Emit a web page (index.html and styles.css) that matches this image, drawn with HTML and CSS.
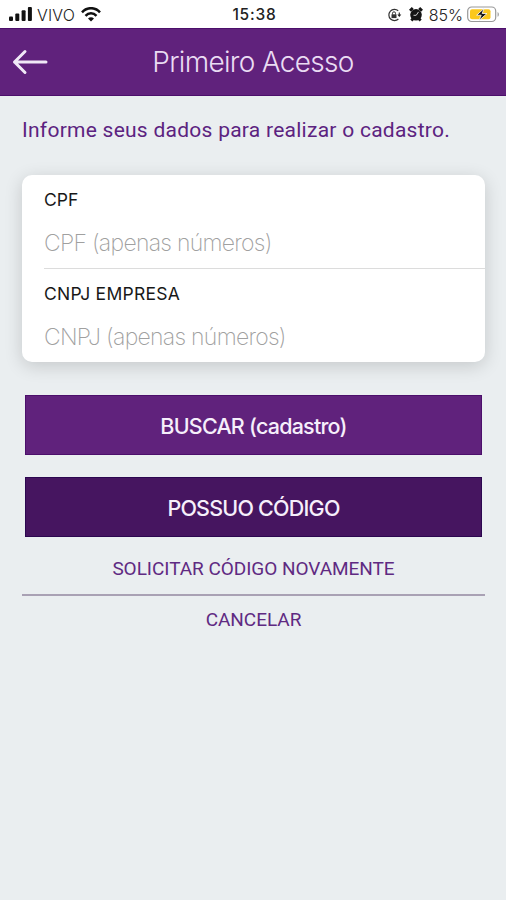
FILE: index.html
```html
<!DOCTYPE html>
<html lang="pt-BR">
<head>
<meta charset="utf-8">
<title>Primeiro Acesso</title>
<link rel="stylesheet" href="styles.css">
</head>
<body>
<div class="status">
  <div class="status-left">
    <svg class="signal" width="24" height="15" viewBox="0 0 24 15"><rect x="0" y="9.5" width="4" height="4.5" rx="1"/><rect x="6.3" y="6.5" width="4" height="7.5" rx="1"/><rect x="12.6" y="3.2" width="4" height="10.8" rx="1"/><rect x="18.9" y="0" width="4" height="14" rx="1"/></svg>
    <span class="carrier">VIVO</span>
    <svg class="wifi" width="20" height="15" viewBox="0 0 20 15" fill="none" stroke="#111" stroke-width="2.5"><path d="M1 5.3C6-.2 14-.2 19 5.3M4.5 8.9c3.2-3.4 7.8-3.4 11 0"/><path d="M7 11.4c1.8-1.7 4.2-1.7 6 0L10 14.5z" fill="#111" stroke="none"/></svg>
  </div>
  <span class="time">15:38</span>
  <div class="status-right">
    <svg class="lock" width="15" height="14" viewBox="0 0 15 14" fill="none" stroke="#333"><path d="M11.2 2.8A5.6 5.6 0 1 0 11.4 11M12.3 4.5v3" stroke-width="1.2"/><path d="M10.3 6.5h4L12.3 9z" fill="#222" stroke="none"/><rect x="4.5" y="6.3" width="5" height="3.8" fill="#333" stroke="none"/><path d="M5.5 6.5V5.3a1.5 1.5 0 0 1 3 0v1.2"/></svg>
    <svg class="alarm" width="14" height="15" viewBox="0 0 14 15"><circle cx="7" cy="7.8" r="5.8" fill="#151515"/><path d="M1 3.8 3.8 1M13 3.8 10.2 1M2.3 13.5l2-2M11.7 13.5l-2-2" stroke="#151515" stroke-width="2.8"/><path d="M4.5 8.3H7.2l2.3-3.4" stroke="#ccc" fill="none"/></svg>
    <span class="percent">85%</span>
    <svg class="battery" width="33" height="17" viewBox="0 0 33 17"><rect x=".7" y="1" width="28" height="14.5" rx="4" fill="#fff" stroke="#999" stroke-width="1.2"/><rect x="3" y="3.2" width="20.5" height="10" rx="2" fill="#fbc81c"/><path d="M30.5 6v4.8c2-.8 2-4 0-4.8" fill="#aaa"/><path d="M17 2.5 9.7 9.2h4.5L12 14.5l8-7h-4.8z" fill="#151515" stroke="#fff" stroke-width=".8"/></svg>
  </div>
</div>
<header class="bar">
  <svg class="back" width="36" height="26" viewBox="0 0 36 26" fill="none" stroke="#f0e8f6" stroke-width="3" stroke-linecap="round" stroke-linejoin="round"><path d="M34 13H2.5M13 2.5 2.5 13 13 23.5"/></svg>
  <h1><span class="title">Primeiro Acesso</span></h1>
</header>
<main>
  <p class="intro">Informe seus dados para realizar o cadastro.</p>
  <section class="card">
    <div class="field"><span class="label cpf">CPF</span><span class="hint">CPF (apenas números)</span></div>
    <div class="field"><span class="label cnpj">CNPJ EMPRESA</span><span class="hint">CNPJ (apenas números)</span></div>
  </section>
  <div class="button search"><span>BUSCAR (cadastro)</span></div>
  <div class="button code"><span>POSSUO CÓDIGO</span></div>
  <div class="link again"><span>SOLICITAR CÓDIGO NOVAMENTE</span></div>
  <div class="link cancel"><span>CANCELAR</span></div>
</main>
</body>
</html>
```
FILE: styles.css
```css
* { box-sizing: border-box; }
body {
  margin: 0;
  height: 900px;
  background: #eaeef0;
  font-family: Inter, "Liberation Sans", sans-serif;
  white-space: nowrap;
  overflow: hidden;
}
.status {
  height: 28px;
  background: #fff;
  display: grid;
  grid-template-columns: 1fr auto 1fr;
  align-items: center;
  padding: 0 6px 0 9px;
  color: #222;
}
.status-left, .status-right { display: flex; align-items: center; }
.status-right { justify-content: flex-end; }
.signal { fill: #111; }
.carrier { font: 300 16px/28px Inter, sans-serif; letter-spacing: .2px; margin: 1px 6px 0 4px; }
.time { font: 500 15.5px/28px Inter, sans-serif; letter-spacing: .8px; margin-top: 1px; }
.lock { margin-right: 7px; }
.alarm { margin-right: 6px; }
.percent { font: 300 16px/28px Inter, sans-serif; margin: 1px 4px 0 0; }
.bar {
  height: 68px;
  background: #60227c;
  border-top: 1px solid #4c0f6b;
  border-bottom: 1px solid #4c0f6b;
  display: grid;
  grid-template-columns: 36px 1fr 36px;
  align-items: center;
  padding: 0 12px;
}
h1 { margin: 0; text-align: center; font: 300 28px/66px Inter, sans-serif; color: #eadcf3; }
.title { letter-spacing: -.7px; }
main { padding: 0 21px 0 22px; }
.intro { margin: 18px 0 0; font: 400 21px/32px Roboto, sans-serif; letter-spacing: .26px; color: #5c2380; }
.card {
  margin-top: 29px;
  height: 187px;
  background: #fff;
  border-radius: 10px;
  padding-left: 22px;
  box-shadow: 0 4px 18px rgba(0, 0, 0, .16);
}
.field { height: 94px; display: flex; flex-direction: column; align-items: flex-start; padding-top: 13px; }
.field:first-child { border-bottom: 1px solid #dcdcdc; }
.label { font: 400 17.5px/24px Inter, sans-serif; color: #181818; }
.cnpj { letter-spacing: .25px; }
.hint { font: 200 23px/30px Inter, sans-serif; letter-spacing: -.72px; color: #a0a0a0; margin-top: 16px; }
.button {
  height: 60px;
  margin: 0 3px;
  display: flex;
  align-items: center;
  justify-content: center;
  font: 500 21.5px/30px Inter, sans-serif;
  letter-spacing: -.78px;
  padding-top: 1px;
  color: #f6effb;
}
.search { margin-top: 33px; background: #60227c; border: 1px solid #4c0f6b; }
.code { margin-top: 22px; background: #461560; border: 1px solid #2c0750; }
.link { text-align: center; font: 400 19px/28px Roboto, sans-serif; letter-spacing: -.04px; color: #5f2a82; }
.again { height: 59px; padding-top: 18px; border-bottom: 2px solid #a9a1b4; }
.cancel { padding-top: 10px; }
```
